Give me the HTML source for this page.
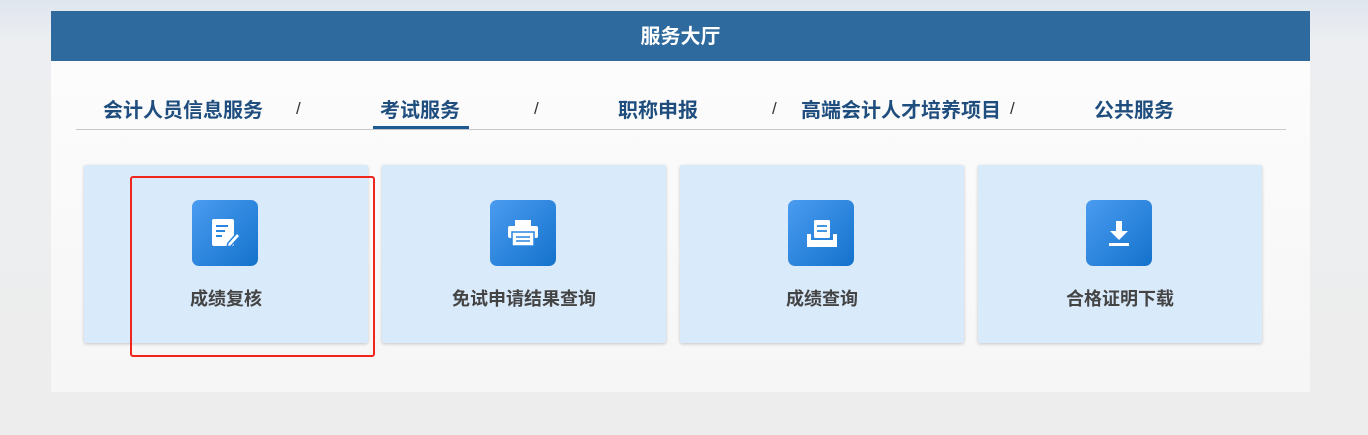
<!DOCTYPE html>
<html><head><meta charset="utf-8"><style>
*{margin:0;padding:0;box-sizing:border-box}
body{width:1368px;height:435px;overflow:hidden;background:linear-gradient(#dfe6ef 0,#eceef1 40px,#ededed 100%);font-family:"Liberation Sans","Noto Sans CJK SC",sans-serif;position:relative}
.panel{position:absolute;left:51px;top:11px;width:1259px;height:381px;background:linear-gradient(#fdfdfd,#f6f6f6)}
.hd{height:50px;background:#2e6a9e;color:#fff;font-weight:bold;font-size:20px;text-align:center;line-height:52px}
.tabs{position:absolute;left:25px;top:0;width:1210px;height:119px;border-bottom:1px solid #c8c8c8}
.t{position:absolute;top:83px;font-size:20px;font-weight:bold;color:#1f4e7e}
.s{position:absolute;top:88px;font-size:17px;color:#333}
.ul{position:absolute;left:297px;top:115px;width:96px;height:3px;background:#1f5a90}
.card{position:absolute;top:154px;width:284px;height:178px;background:#d9eafb;box-shadow:0 1px 3px rgba(0,0,0,.2);border-radius:2px}
.ic{position:absolute;left:108px;top:35px;width:66px;height:66px;border-radius:7px;background:linear-gradient(135deg,#4a9cf0,#1472cc)}
.ic svg{position:absolute;left:0;top:0}
.lb{position:absolute;top:120px;width:100%;text-align:center;font-size:18px;font-weight:bold;color:#444}
.red{position:absolute;left:130px;top:176px;width:245px;height:181px;border:2px solid #f0261e;border-radius:3px}
</style></head><body>
<div class="panel">
<div class="hd">服务大厅</div>
<div class="tabs">
<span class="t" style="left:27px">会计人员信息服务</span>
<span class="s" style="left:220px">/</span>
<span class="t" style="left:304px">考试服务</span>
<span class="s" style="left:458px">/</span>
<span class="t" style="left:542px">职称申报</span>
<span class="s" style="left:696px">/</span>
<span class="t" style="left:725px">高端会计人才培养项目</span>
<span class="s" style="left:934px">/</span>
<span class="t" style="left:1018px">公共服务</span>
<div class="ul"></div>
</div>
<div class="card" style="left:33px"><div class="ic"><svg width="66" height="66"><rect x="20" y="19" width="22" height="27" rx="2" fill="#fff"/><path d="M24 26h12M24 31h9M24 36h6" stroke="#2a85e0" stroke-width="2"/><path d="M36 43l9-10 3 3-9 10-4 1z" fill="#fff" stroke="#2a85e0" stroke-width="1.5"/></svg></div><div class="lb">成绩复核</div></div>
<div class="card" style="left:331px"><div class="ic"><svg width="66" height="66"><rect x="25" y="20" width="16" height="6" fill="#fff"/><rect x="18" y="26" width="30" height="12" rx="2" fill="#fff"/><rect x="22" y="32" width="22" height="14" fill="#fff" stroke="#2a85e0" stroke-width="1.5"/><path d="M26 37h14M26 41h14" stroke="#2a85e0" stroke-width="1.5"/></svg></div><div class="lb">免试申请结果查询</div></div>
<div class="card" style="left:629px"><div class="ic"><svg width="66" height="66"><rect x="26" y="20" width="16" height="18" rx="1.5" fill="#fff"/><path d="M29 26h10M29 31h10" stroke="#2a85e0" stroke-width="1.8"/><path d="M19 34h4v6h22v-6h4v13H19z" fill="#fff"/></svg></div><div class="lb">成绩查询</div></div>
<div class="card" style="left:927px"><div class="ic"><svg width="66" height="66"><path d="M30 21h6v10h6l-9 9-9-9h6z" fill="#fff"/><rect x="23" y="43" width="20" height="3" fill="#fff"/></svg></div><div class="lb">合格证明下载</div></div>
</div>
<div class="red"></div>
</body></html>
